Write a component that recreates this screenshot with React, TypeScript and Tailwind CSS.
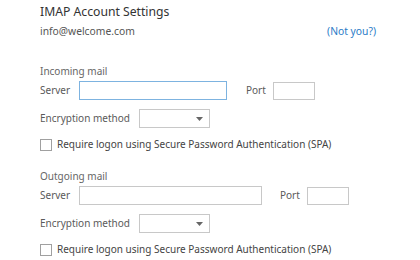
import React from 'react';

const font = { fontFamily: '"Noto Sans", "Open Sans", sans-serif' };

function Select() {
    return (
        <div className="relative w-[71px] h-[19px] border border-[#c8c8c8] bg-white">
            <svg className="absolute right-[6px] top-[7px]" width="7" height="4" viewBox="0 0 7 4">
                <path d="M0 0 L7 0 L3.5 4 Z" fill="#666" />
            </svg>
        </div>
    );
}

function Checkbox() {
    return (
        <label className="flex items-center gap-[5px] text-[10px] text-[#444]">
            <span className="w-[12px] h-[12px] border border-[#a0a0a0] bg-white" />
            Require logon using Secure Password Authentication (SPA)
        </label>
    );
}

function Section({ title, serverWidth, focused, portGap }: { title: string; serverWidth: string; focused?: boolean; portGap: string }) {
    return (
        <div className="flex flex-col">
            <div className="text-[10px] text-[#666] leading-[14px]">{title}</div>
            <div className="flex items-center mt-[3px] h-[19px]">
                <span className="text-[10px] text-[#5a5a5a] w-[39px]">Server</span>
                <div className={`${serverWidth} h-[19px] bg-white border ${focused ? 'border-[#7db3e0]' : 'border-[#c8c8c8]'}`} />
                <span className={`text-[10px] text-[#5a5a5a] ${portGap}`}>Port</span>
                <div className="w-[42px] h-[18px] bg-white border border-[#c8c8c8]" />
            </div>
            <div className="flex items-center mt-[9px] h-[19px]">
                <span className="text-[10px] text-[#5a5a5a] w-[99px]">Encryption method</span>
                <Select />
            </div>
            <div className="mt-[9px]">
                <Checkbox />
            </div>
        </div>
    );
}

export default function App() {
    return (
        <main className="w-[420px] h-[260px] bg-white px-[40px] pt-[3px] overflow-hidden" style={font}>
            <h1 className="text-[12.2px] text-[#333] leading-[18px]">IMAP Account Settings</h1>
            <div className="flex justify-between items-center mt-[3px] pr-[4px]">
                <span className="text-[10.3px] text-[#555]">info@welcome.com</span>
                <a className="text-[10.3px] text-[#2a7cc7] cursor-pointer">(Not you?)</a>
            </div>
            <div className="mt-[25px]">
                <Section title="Incoming mail" serverWidth="w-[148px]" focused portGap="ml-[19px] w-[27px]" />
            </div>
            <div className="mt-[17px]">
                <Section title="Outgoing mail" serverWidth="w-[183px]" portGap="ml-[18px] w-[27px]" />
            </div>
        </main>
    );
}
